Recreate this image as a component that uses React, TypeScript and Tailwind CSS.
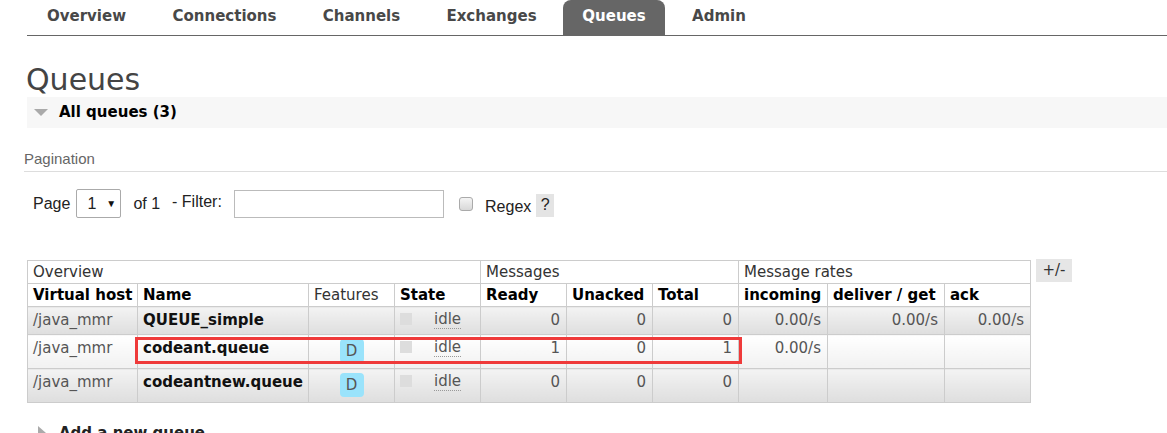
import React from 'react';

const tabs = [
  { label: 'Overview', w: 'w-[119px]' },
  { label: 'Connections', w: 'w-[143px]' },
  { label: 'Channels', w: 'w-[117px]' },
  { label: 'Exchanges', w: 'w-[129px]' },
  { label: 'Queues', w: 'w-[102px]' },
  { label: 'Admin', w: 'w-[94px]' },
];

interface QueueRow {
  vhost: string;
  name: string;
  durable: boolean;
  ready: number;
  unacked: number;
  total: number;
  incoming: string;
  deliver: string;
  ack: string;
}

const rows: QueueRow[] = [
  { vhost: '/java_mmr', name: 'QUEUE_simple', durable: false, ready: 0, unacked: 0, total: 0, incoming: '0.00/s', deliver: '0.00/s', ack: '0.00/s' },
  { vhost: '/java_mmr', name: 'codeant.queue', durable: true, ready: 1, unacked: 0, total: 1, incoming: '0.00/s', deliver: '', ack: '' },
  { vhost: '/java_mmr', name: 'codeantnew.queue', durable: true, ready: 0, unacked: 0, total: 0, incoming: '', deliver: '', ack: '' },
];

const th = 'border border-[#ccc] px-[5px] py-[2px] leading-[18px] text-left whitespace-nowrap';
const td = 'border border-[#ccc] px-[5px] pt-[4px] pb-[5px] leading-[18px] align-top whitespace-nowrap';

export default function App() {
  return (
    <div className="w-[1167px] h-[433px] overflow-hidden bg-white font-['DejaVu_Sans',Verdana,sans-serif] text-[15px] text-[#333]">
      {/* top nav */}
      <div className="pl-[27px]">
        <div className="flex gap-[7px] h-[36px] border-b border-[#666]">
          {tabs.map((t) => (
            <div
              key={t.label}
              className={`${t.w} h-[35px] pt-[6px] text-center text-[15px] font-bold leading-[20px] rounded-t-[8px] ${
                t.label === 'Queues' ? 'bg-[#666] text-white' : 'text-[#484848]'
              }`}
            >
              {t.label}
            </div>
          ))}
        </div>
      </div>

      <div className="pl-[27px]">
        <h1 className="mt-[26px] -ml-[1px] text-[30px] leading-[35px] text-[#444] font-normal">Queues</h1>

        <div className="h-[31px] bg-[#f7f7f7] flex items-center">
          <span className="ml-[7px] w-0 h-0 border-l-[7px] border-r-[7px] border-t-[7px] border-l-transparent border-r-transparent border-t-[#aaa]" />
          <span className="ml-[11px] font-bold text-black">All queues (3)</span>
        </div>

        <div className="mt-[22px] -ml-[3px] pb-[3px] border-b border-[#ddd] font-['Liberation_Sans',Arial,sans-serif] text-[15px] leading-[18px] text-[#666]">
          Pagination
        </div>

        {/* pagination row */}
        <div className="mt-[17px] ml-[6px] flex items-center h-[29px] font-['Liberation_Sans',Arial,sans-serif] text-[16px] text-[#222]">
          <span>Page</span>
          <div className="ml-[6px] w-[45px] h-[29px] border border-[#aaa] rounded-[2px] bg-white flex items-center">
            <span className="ml-[10px]">1</span>
            <span className="ml-[10px] text-[10px] text-[#111]">▼</span>
          </div>
          <span className="ml-[12px]">of 1</span>
          <span className="ml-[12px] -mt-[3px] w-[56px]">- Filter:</span>
          <div className="ml-[6px] w-[210px] h-[28px] border border-[#bbb] bg-white" />
          <div className="ml-[15px] w-[14px] h-[14px] rounded-[3px] border border-[#aaa] bg-linear-to-b from-[#f4f4f4] to-[#d8d8d8]" />
          <span className="ml-[12px] pt-[6px]">Regex</span>
          <span className="ml-[5px] mt-[3px] w-[18px] h-[23px] bg-[#e4e4e4] flex items-center justify-center">?</span>
        </div>

        {/* queues table */}
        <div className="mt-[42px] flex items-start gap-[5px]">
          <div className="relative">
            <table className="table-fixed border-collapse w-[1004px]">
              <colgroup>
                <col className="w-[110px]" />
                <col className="w-[171px]" />
                <col className="w-[86px]" />
                <col className="w-[86px]" />
                <col className="w-[86px]" />
                <col className="w-[86px]" />
                <col className="w-[86px]" />
                <col className="w-[89px]" />
                <col className="w-[117px]" />
                <col className="w-[86px]" />
              </colgroup>
              <thead>
                <tr>
                  <th colSpan={4} className={`${th} font-normal text-[#333]`}>Overview</th>
                  <th colSpan={3} className={`${th} font-normal text-[#333]`}>Messages</th>
                  <th colSpan={3} className={`${th} font-normal text-[#333]`}>Message rates</th>
                </tr>
                <tr>
                  <th className={`${th} font-bold text-black`}>Virtual host</th>
                  <th className={`${th} font-bold text-black`}>Name</th>
                  <th className={`${th} font-normal text-[#333]`}>Features</th>
                  <th className={`${th} font-bold text-black`}>State</th>
                  <th className={`${th} font-bold text-black`}>Ready</th>
                  <th className={`${th} font-bold text-black`}>Unacked</th>
                  <th className={`${th} font-bold text-black`}>Total</th>
                  <th className={`${th} font-bold text-black`}>incoming</th>
                  <th className={`${th} font-bold text-black`}>deliver / get</th>
                  <th className={`${th} font-bold text-black`}>ack</th>
                </tr>
              </thead>
              <tbody>
                {rows.map((r, i) => {
                  const bg = i % 2 === 0 ? 'bg-linear-to-b from-[#f3f3f3] to-[#dedede]' : 'bg-linear-to-b from-white to-[#f1f1f1]';
                  return (
                    <tr key={r.name}>
                      <td className={`${td} ${bg} text-[#555]`}>{r.vhost}</td>
                      <td className={`${td} ${bg} font-bold text-[#111]`}>{r.name}</td>
                      <td className={`${td} ${bg} text-center`}>
                        {r.durable && (
                          <span className="inline-block align-top w-[24px] h-[24px] rounded-[4px] bg-[#9ae3fb] text-[#555] leading-[24px] text-center">
                            D
                          </span>
                        )}
                      </td>
                      <td className={`${td} ${bg} text-[#555]`}>
                        <div className="flex items-center">
                          <span className="w-[12px] h-[12px] bg-[#ddd] -mt-[2px]" />
                          <span className="ml-[22px] leading-[17px] border-b border-dotted border-[#999]">idle</span>
                        </div>
                      </td>
                      <td className={`${td} ${bg} text-right pr-[6px] text-[#555]`}>{r.ready}</td>
                      <td className={`${td} ${bg} text-right pr-[6px] text-[#555]`}>{r.unacked}</td>
                      <td className={`${td} ${bg} text-right pr-[6px] text-[#555]`}>{r.total}</td>
                      <td className={`${td} ${bg} text-right pr-[6px] text-[#555]`}>{r.incoming}</td>
                      <td className={`${td} ${bg} text-right pr-[6px] text-[#555]`}>{r.deliver}</td>
                      <td className={`${td} ${bg} text-right pr-[6px] text-[#555]`}>{r.ack}</td>
                    </tr>
                  );
                })}
              </tbody>
            </table>
            {/* highlight box drawn over the second row */}
            <div className="absolute left-[108px] top-[77px] w-[607px] h-[27px] border-[3px] border-[#ef3a3a] pointer-events-none" />
          </div>
          <div className="-mt-[1px] w-[36px] h-[23px] bg-[#e6e6e6] text-[#333] leading-[23px] text-center">+/-</div>
        </div>

        <div className="mt-[21px] flex items-center">
          <span className="ml-[11px] w-0 h-0 border-t-[7px] border-b-[7px] border-l-[8px] border-t-transparent border-b-transparent border-l-[#aaa]" />
          <span className="ml-[13px] font-bold text-[#222] leading-[18px]">Add a new queue</span>
        </div>
      </div>
    </div>
  );
}
